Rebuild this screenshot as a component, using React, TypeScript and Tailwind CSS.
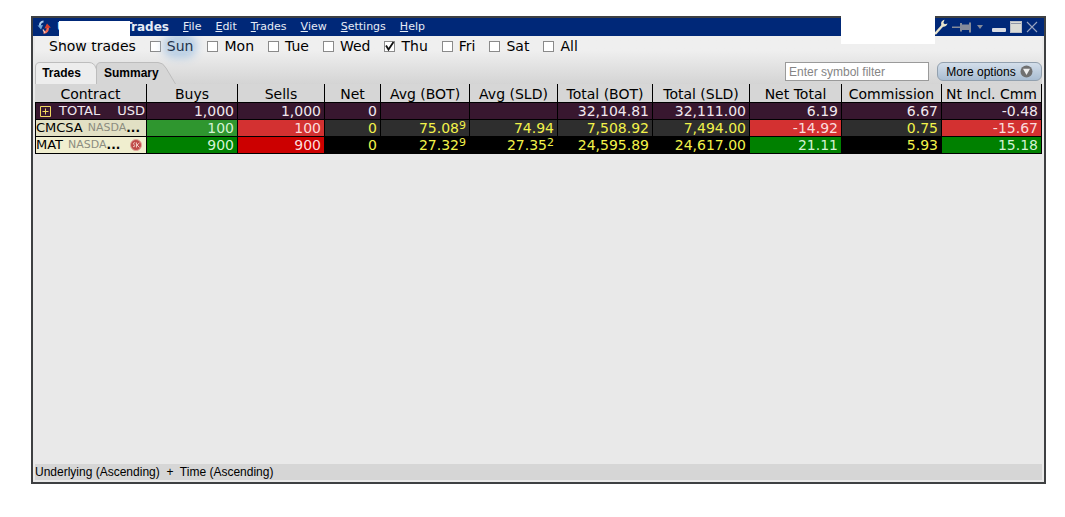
import React from "react";
import { clsx } from "clsx";

const menus = ["File", "Edit", "Trades", "View", "Settings", "Help"];
const days = ["Sun", "Mon", "Tue", "Wed", "Thu", "Fri", "Sat", "All"];

const columns = [
  { title: "Contract", width: 112 },
  { title: "Buys", width: 91 },
  { title: "Sells", width: 87 },
  { title: "Net", width: 56 },
  { title: "Avg (BOT)", width: 89 },
  { title: "Avg (SLD)", width: 88 },
  { title: "Total (BOT)", width: 95 },
  { title: "Total (SLD)", width: 97 },
  { title: "Net Total", width: 92 },
  { title: "Commission", width: 100 },
  { title: "Nt Incl. Cmm", width: 100 },
];

type Cell = { text: string; sup?: string; tone?: string };

const total = ["1,000", "1,000", "0", "", "", "32,104.81", "32,111.00", "6.19", "6.67", "-0.48"];

const cmcsa: Cell[] = [
  { text: "100", tone: "bg-[#2f962f] text-[#d4f2d4]" },
  { text: "100", tone: "bg-[#d33131] text-[#fbdcdc]" },
  { text: "0" },
  { text: "75.08", sup: "9" },
  { text: "74.94" },
  { text: "7,508.92" },
  { text: "7,494.00" },
  { text: "-14.92", tone: "bg-[#d33131] text-[#fbdcdc]" },
  { text: "0.75" },
  { text: "-15.67", tone: "bg-[#d33131] text-[#fbdcdc]" },
];

const mat: Cell[] = [
  { text: "900", tone: "bg-[#008000] text-[#d4f2d4]" },
  { text: "900", tone: "bg-[#cc0000] text-[#fbdcdc]" },
  { text: "0" },
  { text: "27.32", sup: "9" },
  { text: "27.35", sup: "2" },
  { text: "24,595.89" },
  { text: "24,617.00" },
  { text: "21.11", tone: "bg-[#008000] text-[#d4f2d4]" },
  { text: "5.93" },
  { text: "15.18", tone: "bg-[#008000] text-[#d4f2d4]" },
];

const Logo = () => (
  <svg className="h-3.5 w-3.5" viewBox="0 0 14 14" fill="none" aria-hidden="true">
    <path d="M6.500 1.500C4 1.500 2.600 3.500 3 6" stroke="#a8cbee" strokeWidth="2" />
    <path d="M.5 5.500 6 5 4 9.500Z" fill="#6ea6dc" />
    <path d="M6.500 12.500c3 .4 4.800-2.600 4-5.500" stroke="#ee6a54" strokeWidth="2.400" />
    <path d="M7.400 8.500 10 3.500l3.800 4Z" fill="#d8402e" />
    <path d="M8 13 6 9.500" stroke="#f4c8bc" strokeWidth="1.400" />
  </svg>
);

const TitleBar = () => (
  <header className="relative flex h-[18px] items-center bg-[#002878] pl-1 text-[11px] text-[#e6ecf6]">
    <Logo />
    <h1 className="ml-1.5 flex w-28 justify-between text-xs font-bold">
      <span>U</span>
      <span>Trades</span>
    </h1>
    <nav className="ml-3.5 flex gap-3.5">
      {menus.map((menu) => (
        <button key={menu} className="leading-4">
          <span className="underline">{menu[0]}</span>
          {menu.slice(1)}
        </button>
      ))}
    </nav>
    <div className="ml-auto flex items-center pr-1.5">
      <button aria-label="Configure">
        <svg className="h-4 w-4" viewBox="0 0 16 16" fill="none">
          <path d="M3 15 11 6" stroke="#e8e4cc" strokeWidth="2.400" />
          <path d="M12.500.8C10 1.200 8.500 3.500 9.400 6s4.600 2.300 6.200-1.600l-2.700.9-1.500-1.300z" fill="#e8e4cc" />
        </svg>
      </button>
      <button aria-label="Pin" className="ml-1">
        <svg className="h-3 w-5" viewBox="0 0 20 12">
          <path d="M0 5.500h9v1.500H0zM8 2h2v1.500h7V1.500h2v10h-2V9h-7v1.500H8z" fill="#858b9a" />
        </svg>
      </button>
      <button aria-label="Pin menu" className="ml-1">
        <svg className="h-3 w-2" viewBox="0 0 8 12">
          <path d="M1 4h6L4 8z" fill="#858b9a" />
        </svg>
      </button>
      <button aria-label="Minimize" className="ml-2">
        <svg className="h-3.5 w-3.5" viewBox="0 0 14 14">
          <rect y="8" width="14" height="4" rx="1" fill="#d8dbe2" />
        </svg>
      </button>
      <button aria-label="Maximize" className="ml-1">
        <svg className="h-3 w-3" viewBox="0 0 12 12">
          <rect x=".5" y=".5" width="11" height="11" fill="#dadbd6" stroke="#b9bdc6" />
          <path d="M1 2.500h10" stroke="#8c94a6" />
        </svg>
      </button>
      <button aria-label="Close" className="ml-1">
        <svg className="h-3 w-3" viewBox="0 0 12 12">
          <path d="m1 1 10 10M11 1 1 11" stroke="#98a4c0" strokeWidth="1.100" />
        </svg>
      </button>
    </div>
    <div className="absolute top-[3px] left-[26px] z-10 h-[21px] w-[71px] bg-white" />
    <div className="absolute -top-1 right-[109px] z-10 h-[30px] w-[94px] bg-white" />
  </header>
);

const DayFilter = () => (
  <div role="group" aria-label="Show trades" className="flex h-5 items-center pl-3.5 text-sm">
    <span className="mr-3.5">Show trades</span>
    <div className="flex gap-3.5">
      {days.map((day) => (
        <label key={day} className="flex items-center gap-1.5">
          <input
            type="checkbox"
            defaultChecked={day === "Thu"}
            className="peer h-[11px] w-[11px] appearance-none border border-[#8a8a8a] bg-white"
          />
          {day === "Thu" && (
            <svg className="pointer-events-none -ml-[17px] h-[11px] w-[11px] peer-[:not(:checked)]:invisible" viewBox="0 0 11 11">
              <path d="M2 4.500 4.500 8.500 9.500 1" fill="none" stroke="#111" strokeWidth="1.800" />
            </svg>
          )}
          <span
            className={clsx(
              "leading-4",
              day === "Sun" && "rounded-full bg-[#b4cce4]/80 text-[#24344c] shadow-[0_0_8px_4px_#b4cce4]"
            )}
          >
            {day}
          </span>
        </label>
      ))}
    </div>
  </div>
);

const Toolbar = () => (
  <div className="mt-1.5 flex items-start justify-between font-['Liberation_Sans',sans-serif] text-xs">
    <div role="tablist" className="flex font-bold">
      <button role="tab" aria-selected="false" className="relative h-[22px] w-[61px] pr-2 text-center">
        <svg className="absolute top-0 left-0 h-[22px] w-[66px]" viewBox="0 0 66 22" aria-hidden="true">
          <path d="M.5 22V5Q.5.5 5 .5H54Q59 .5 61 6L66 22" fill="#ededed" stroke="#bdbdbd" />
        </svg>
        <span className="relative">Trades</span>
      </button>
      <button role="tab" aria-selected="true" className="relative h-[22px] w-20 pl-2 text-left">
        <svg className="absolute top-0 left-0 h-[22px] w-20" viewBox="0 0 80 22" aria-hidden="true">
          <path d="M.5 22V5Q.5.5 5 .5H62Q67 .5 70 6L79.500 22" fill="#d6d6d6" stroke="#bdbdbd" />
        </svg>
        <span className="relative">Summary</span>
      </button>
    </div>
    <div className="flex gap-2">
      <input
        aria-label="Symbol filter"
        placeholder="Enter symbol filter"
        className="h-[19px] w-36 border border-[#9a9a9a] bg-white px-[3px] placeholder:text-[#858585]"
      />
      <button className="flex h-[19px] w-[105px] items-center justify-center gap-1 rounded-md border border-[#92a0ae] bg-linear-to-b from-[#d3deea] to-[#a9bdd2]">
        More options
        <svg className="h-[13px] w-[13px]" viewBox="0 0 13 13" aria-hidden="true">
          <circle cx="6.500" cy="6.500" r="6" fill="#707070" />
          <path d="M3 3.800h7L6.500 10z" fill="#eee" />
        </svg>
      </button>
    </div>
  </div>
);

const Contract = ({ symbol, badge, tone }: { symbol: string; badge?: boolean; tone: string }) => (
  <th scope="row" className={clsx("border-x border-b border-black p-0 font-normal text-black", tone)}>
    <div className="flex h-4 items-center whitespace-nowrap text-[13px] leading-4">
      <span>{symbol}</span>
      <span className="ml-[5px] text-[11px] text-[#8c8c80]">NASDA</span>
      <span className="text-xs font-bold">...</span>
      {badge && (
        <svg className="mr-1 ml-auto h-3 w-3 shrink-0" viewBox="0 0 12 12" aria-hidden="true">
          <circle cx="6" cy="6" r="5.500" fill="#c04a48" stroke="#dfa59c" />
          <path d="M5.300 4C4 3 2.800 4.500 4 5.600s1 2.600-1 2M6.500 3.500v5M9.500 3.800 7 6l2.500 2.500" fill="none" stroke="#f2d4cc" strokeWidth=".9" />
        </svg>
      )}
    </div>
  </th>
);

const Cells = ({ cells }: { cells: Cell[] }) => (
  <>
    {cells.map((cell, i) => (
      <td key={i} className={clsx("border-r border-b border-black p-0 pr-[3px]", cell.tone)}>
        <div className="flex h-4 justify-end leading-4">
          {cell.text}
          {cell.sup && <sup className="top-0 text-[11px] leading-3">{cell.sup}</sup>}
        </div>
      </td>
    ))}
  </>
);

const SummaryTable = () => (
  <table className="w-full table-fixed border-separate border-spacing-0 text-right text-sm">
    <colgroup>
      {columns.map((col) => (
        <col key={col.title} style={{ width: col.width }} />
      ))}
    </colgroup>
    <thead className="bg-[#d6d6d6]">
      <tr>
        {columns.map((col) => (
          <th
            key={col.title}
            scope="col"
            className="h-[19px] border-r border-b border-black p-0 pt-0.5 text-center leading-4 font-normal whitespace-nowrap"
          >
            {col.title}
          </th>
        ))}
      </tr>
    </thead>
    <tbody>
      <tr className="bg-[#38172f] text-[#f0e8ee]">
        <th scope="row" className="border-x border-b border-black p-0 font-normal">
          <div className="flex h-4 items-center pr-px pl-1 text-[13px] leading-4">
            <button aria-label="Expand total">
              <svg className="h-[11px] w-[11px]" viewBox="0 0 11 11">
                <path d="M.5.5h10v10H.5zM5.500 2.500v6M2.500 5.500h6" fill="none" stroke="#f0d860" />
              </svg>
            </button>
            <span className="ml-2">TOTAL</span>
            <span className="ml-auto">USD</span>
          </div>
        </th>
        <Cells cells={total.map((text) => ({ text }))} />
      </tr>
      <tr className="bg-[#2e2e2e] text-[#f2f24a]">
        <Contract symbol="CMCSA" tone="bg-[#e2e0c4]" />
        <Cells cells={cmcsa} />
      </tr>
      <tr className="bg-black text-[#f2f24a]">
        <Contract symbol="MAT" tone="bg-[#f0eecf]" badge />
        <Cells cells={mat} />
      </tr>
    </tbody>
  </table>
);

const App = () => {
  return (
    <div className="flex min-h-screen flex-col bg-white pt-4 pr-[19px] pb-[33px] pl-[31px] font-['DejaVu_Sans',Verdana,sans-serif] text-black">
      <div className="flex flex-1 flex-col border-2 border-[#3e4042] bg-[#e9e9e9]">
        <TitleBar />
        <main className="flex flex-1 flex-col px-0.5 pb-0.5">
          <div className="bg-linear-to-b from-[#efefef] from-30% to-[#d4d4d4]">
            <DayFilter />
            <Toolbar />
          </div>
          <SummaryTable />
          <footer className="mt-auto bg-[#d6d6d6] font-['Liberation_Sans',sans-serif] text-xs leading-4 whitespace-pre">
            Underlying (Ascending)  +  Time (Ascending)
          </footer>
        </main>
      </div>
    </div>
  );
};

export default App;
